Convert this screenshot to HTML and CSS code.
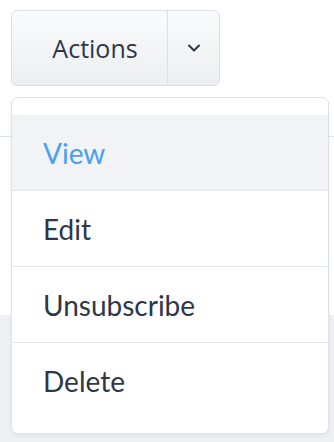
FILE: index.html
```html
<!DOCTYPE html>
<html>
<head>
<meta charset="utf-8">
<link rel="stylesheet" href="styles.css">
</head>
<body>
<div class="page">
  <div class="top">
    <div class="btn-group">
      <button class="btn btn-main">Actions</button>
      <button class="btn btn-caret" aria-label="More">
        <svg class="chev" width="14" height="10" viewBox="0 0 14 10"><path d="M2 2.5 L7 7.5 L12 2.5" fill="none" stroke="#2d3748" stroke-width="2" stroke-linecap="round" stroke-linejoin="round"/></svg>
      </button>
    </div>
  </div>
  <div class="mid"></div>
  <div class="bottom"></div>

  <ul class="menu">
    <li class="item active">View</li>
    <li class="item">Edit</li>
    <li class="item">Unsubscribe</li>
    <li class="item">Delete</li>
  </ul>
</div>
</body>
</html>
```
FILE: styles.css
```css
html, body {
  margin: 0;
  padding: 0;
}
body {
  width: 334px;
  height: 442px;
  overflow: hidden;
  background: #eef0f3;
}
.page {
  position: relative;
  height: 442px;
  display: flex;
  flex-direction: column;
}
.top {
  box-sizing: content-box;
  height: 126px;
  padding: 10px 0 0 11px;
  background: #ffffff;
  border-bottom: 1px solid #dfe2e7;
}
.mid {
  height: 178px;
  background: #ffffff;
}
.bottom {
  flex: 1;
  background: #eef0f3;
}
.btn-group {
  display: inline-flex;
  height: 76px;
  box-sizing: border-box;
  border: 1px solid #dcdfe4;
  border-radius: 6px;
  background: linear-gradient(#fafbfc, #eceef1);
  overflow: hidden;
}
.btn {
  border: 0;
  margin: 0;
  background: transparent;
  font-family: "Open Sans", "Noto Sans", sans-serif;
  color: #2d3748;
  display: flex;
  align-items: center;
  justify-content: center;
  padding: 0;
}
.btn-main {
  width: 156px;
  padding-left: 11px;
  box-sizing: border-box;
  font-size: 25px;
  border-right: 1px solid #dcdfe4;
}
.btn-caret {
  width: 51px;
}
.chev {
  display: block;
}
.menu {
  position: absolute;
  top: 97px;
  left: 11px;
  width: 318px;
  box-sizing: border-box;
  margin: 0;
  padding: 17px 0 15px;
  list-style: none;
  background: #ffffff;
  border: 1px solid #dfe3e8;
  border-radius: 7px;
  box-shadow: 0 2px 4px rgba(30, 40, 60, 0.06);
}
.item {
  height: 75px;
  display: flex;
  align-items: center;
  padding-left: 31px;
  font-family: "Lato", sans-serif;
  font-size: 28px;
  color: #2d3748;
}
.item + .item {
  border-top: 1px solid #e2e6ea;
}
.item.active {
  background: #f1f3f7;
  color: #4a9ff0;
}
```
